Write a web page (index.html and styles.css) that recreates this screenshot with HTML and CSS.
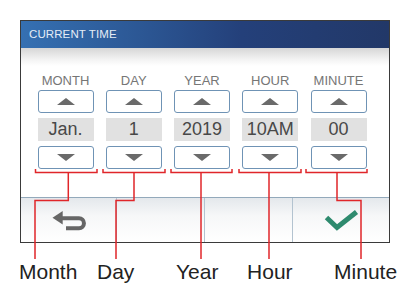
FILE: index.html
```html
<!DOCTYPE html>
<html>
<head>
<meta charset="utf-8">
<link rel="stylesheet" href="styles.css">
</head>
<body>
<div class="page">
  <div class="caption"><span class="caption-text">Display setting</span></div>
  <div class="panel">
    <div class="header">CURRENT TIME</div>
    <div class="body">
      <div class="col">
        <div class="label">MONTH</div>
        <div class="btn"><span class="tri up"></span></div>
        <div class="value">Jan.</div>
        <div class="btn"><span class="tri down"></span></div>
      </div>
      <div class="col">
        <div class="label">DAY</div>
        <div class="btn"><span class="tri up"></span></div>
        <div class="value">1</div>
        <div class="btn"><span class="tri down"></span></div>
      </div>
      <div class="col">
        <div class="label">YEAR</div>
        <div class="btn"><span class="tri up"></span></div>
        <div class="value">2019</div>
        <div class="btn"><span class="tri down"></span></div>
      </div>
      <div class="col">
        <div class="label">HOUR</div>
        <div class="btn"><span class="tri up"></span></div>
        <div class="value">10AM</div>
        <div class="btn"><span class="tri down"></span></div>
      </div>
      <div class="col">
        <div class="label">MINUTE</div>
        <div class="btn"><span class="tri up"></span></div>
        <div class="value">00</div>
        <div class="btn"><span class="tri down"></span></div>
      </div>
    </div>
    <div class="footer">
      <div class="seg">
        <svg width="40" height="26" viewBox="48 205 40 26">
          <polygon points="51.5,215.7 61.7,209 61.7,222.4" fill="#666"/>
          <path d="M60 216.3 H78 A4.95 4.95 0 0 1 78 226.2 H65" fill="none" stroke="#666" stroke-width="4"/>
        </svg>
      </div>
      <div class="seg"></div>
      <div class="seg"></div>
      <div class="seg">
        <svg width="40" height="26" viewBox="321 205 40 26">
          <path d="M326.5 215.5 L337 225.5 L356.5 210" fill="none" stroke="#2e8a6e" stroke-width="5"/>
        </svg>
      </div>
    </div>
  </div>
  <div class="names">
    <span class="name n-month">Month</span>
    <span class="name n-day">Day</span>
    <span class="name n-year">Year</span>
    <span class="name n-hour">Hour</span>
    <span class="name n-minute">Minute</span>
  </div>
  <svg class="callouts" width="409" height="299" viewBox="0 0 409 299">
    <g fill="none" stroke="#e0262a" stroke-width="1.5">
      <path d="M35.5 169 V172.5 H97 V169"/>
      <path d="M103 169 V172.5 H165 V169"/>
      <path d="M171 169 V172.5 H232 V169"/>
      <path d="M239 169 V172.5 H301 V169"/>
      <path d="M306 169 V172.5 H367 V169"/>
      <path d="M68.3 172.5 V200.5 H35 V259"/>
      <path d="M134 172.5 V200.5 H116 V259"/>
      <path d="M201 172.5 V259"/>
      <path d="M269 172.5 V259"/>
      <path d="M337 172.5 V200.5 H361 V259"/>
    </g>
  </svg>
</div>
</body>
</html>
```

FILE: styles.css
```css
* { box-sizing: border-box; }
html, body { margin: 0; padding: 0; background: #fff; }
body { font-family: "Liberation Sans", Arial, sans-serif; }
.page { position: relative; width: 409px; height: 299px; overflow: hidden; }
.caption {
  height: 20px;
  overflow: hidden;
  font-size: 21px;
  color: #222;
  padding-left: 117px;
  display: flex;
  align-items: flex-start;
}
.caption-text { display: block; height: 24px; line-height: 24px; margin-top: -23px; }
.panel {
  margin-left: 20px;
  width: 370px;
  border: 1.5px solid #3a3a3a;
  background: #fff;
}
.header {
  height: 27px;
  background: linear-gradient(to right, #3570b2 0%, #2b5592 35%, #24407a 60%, #223868 100%);
  color: #e4ecf6;
  font-size: 11.5px;
  line-height: 27px;
  padding-left: 8px;
  letter-spacing: 0.1px;
}
.body {
  display: grid;
  grid-template-columns: repeat(5, 56px);
  column-gap: 12.25px;
  padding: 25px 0 28px 16.5px;
  background: linear-gradient(to bottom, #d6d6d6 0px, #f4f4f4 12px, #ffffff 18px);
}
.col { display: flex; flex-direction: column; }
.label {
  font-size: 13px;
  line-height: 15px;
  height: 15px;
  text-align: center;
  color: #767676;
  margin-bottom: 2px;
}
.btn {
  height: 23px;
  border: 1px solid #6f93b5;
  border-radius: 3px;
  background: #fff;
  display: flex;
  align-items: center;
  justify-content: center;
}
.tri { width: 0; height: 0; border-left: 9px solid transparent; border-right: 9px solid transparent; }
.tri.up { border-bottom: 7px solid #6a6a6a; margin-top: -1px; }
.tri.down { border-top: 7.5px solid #6a6a6a; margin-top: 0px; }
.value {
  margin: 5px 0;
  height: 23px;
  background: #e1e1e1;
  color: #484848;
  font-size: 18px;
  line-height: 23px;
  text-align: center;
}
.footer {
  height: 45px;
  display: grid;
  grid-template-columns: 95px 88px 88px 1fr;
  border-top: 1px solid #93a9bb;
  background: linear-gradient(to bottom, #e4e8ec 0%, #f6f7f8 40%, #ffffff 100%);
}
.seg {
  border-left: 1px solid #b3c3d0;
  display: flex;
  align-items: center;
  justify-content: center;
}
.seg:first-child { border-left: none; }
.names {
  display: flex;
  margin-top: 17px;
  padding-left: 19px;
  font-size: 21px;
  line-height: 24px;
  color: #222;
}
.n-day { margin-left: 19.6px; }
.n-year { margin-left: 41.7px; }
.n-hour { margin-left: 28.6px; }
.n-minute { margin-left: 41.5px; }
.callouts { position: absolute; left: 0; top: 0; pointer-events: none; }
```
